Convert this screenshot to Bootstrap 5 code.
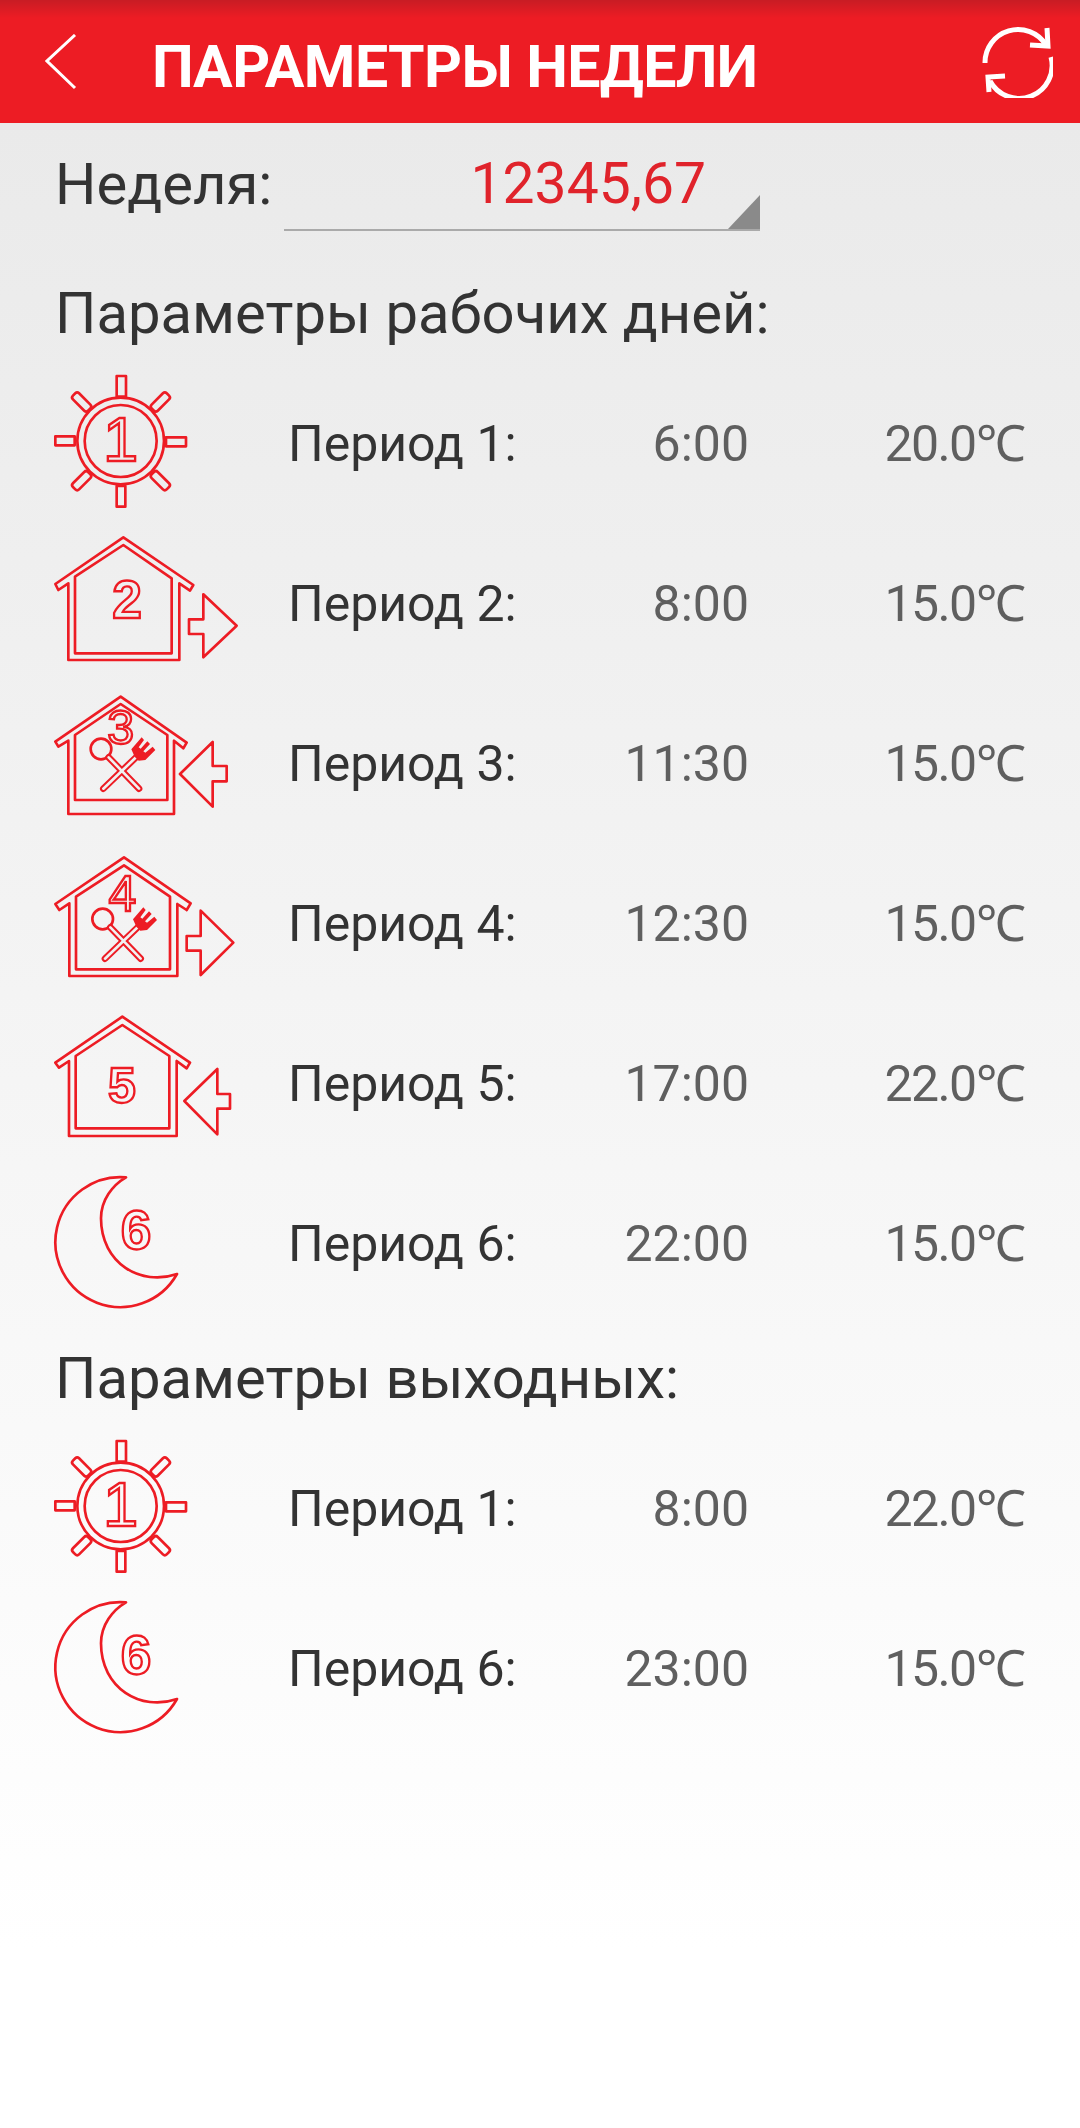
<!DOCTYPE html>
<html lang="ru">
<head>
  <meta charset="UTF-8" />
  <meta name="viewport" content="width=device-width, initial-scale=1.0" />
  <title>Параметры недели</title>
  <link rel="stylesheet" href="https://cdn.jsdelivr.net/npm/bootstrap@5.3.0/dist/css/bootstrap.min.css">
  <style>
    html, body { height: 100%; }
    body { font-family: Roboto, "Liberation Sans", sans-serif; background: linear-gradient(#eaeaea 123px, #ffffff 1950px); color: #333; }
    .top-bar { height: 123px; background: linear-gradient(#c81c24 0, #ed1c24 18px); padding: 0 27px 0 45px; }
    .top-title { font-size: 59px; font-weight: 700; color: #fff; margin: 10px 0 0 75px; line-height: 1; letter-spacing: -0.6px; }
    .week-row { padding: 23px 0 0 55px; height: 160px; }
    .week-label { font-size: 58px; line-height: 76px; color: #333; width: 229px; }
    .week-select { width: 476px; height: 85px; border-bottom: 2px solid #aaa; position: relative; font-size: 57px; color: #e0232b; text-align: right; padding-right: 54px; line-height: 76px; }
    .week-select::after { content: ""; position: absolute; right: 0; bottom: 0; width: 32px; height: 34px; background: #8a8a8a; clip-path: polygon(100% 0, 100% 100%, 0 100%); }
    .sect-title { font-size: 58px; line-height: 60px; padding-left: 55px; color: #333; }
    .sect-two { margin-top: 24px; }
    .per-list { margin-top: 21px; }
    .per-row { height: 160px; font-size: 50px; color: #333; }
    .per-icon { width: 240px; height: 160px; margin-left: 30px; flex: none; }
    .per-name { width: 251px; margin-left: 18px; }
    .per-time { width: 210px; text-align: right; color: #5f5f5f; }
    .per-temp { width: 275px; text-align: right; color: #5f5f5f; letter-spacing: -1.6px; }
    .ln { fill: none; stroke: #ed1c24; stroke-width: 8; stroke-linejoin: round; }
    .dg { fill: none; stroke: #ed1c24; stroke-width: 7; font-family: "Liberation Sans", sans-serif; font-weight: 700; text-anchor: middle; }
  </style>
</head>
<body>
  <svg width="0" height="0" class="position-absolute">
    <defs>
      <g id="sun">
        <circle class="ln" cx="272" cy="243" r="130" />
        <circle class="ln" cx="272" cy="243" r="108" />
        <rect class="ln" x="260" y="48" width="28" height="62" />
        <rect class="ln" x="260" y="378" width="26" height="62" />
        <rect class="ln" x="76" y="229" width="58" height="27" />
        <rect class="ln" x="408" y="232" width="60" height="27" />
        <rect class="ln" x="-32" y="-13" width="64" height="26" rx="8" transform="translate(155 126) rotate(45)" />
        <rect class="ln" x="-32" y="-13" width="64" height="26" rx="8" transform="translate(391 126) rotate(-45)" />
        <rect class="ln" x="-32" y="-13" width="64" height="26" rx="8" transform="translate(155 362) rotate(-45)" />
        <rect class="ln" x="-32" y="-13" width="64" height="26" rx="8" transform="translate(391 362) rotate(45)" />
        <text class="dg" x="272" y="304" font-size="190" style="font-weight:400">1</text>
      </g>
      <g id="food">
        <circle class="ln" cx="213" cy="207" r="31" />
        <path d="M236 232 L327 326 M318 232 L220 326" stroke="#ed1c24" stroke-width="20" stroke-linecap="round" fill="none" />
        <path d="M236 232 L327 326 M318 232 L220 326" stroke="#f1f1f1" stroke-width="8" stroke-linecap="round" fill="none" />
        <path d="M314 230 L304 208 L335 172 L342 180 L326 202 L332 206 L352 184 L360 192 L340 214 L346 218 L368 200 L376 210 L346 240 L326 242 Z" fill="#ed1c24" />
      </g>
      <g id="moon">
        <path class="ln" d="M285 532 A195 195 0 1 0 438 822 C330 860 210 790 210 655 C210 600 245 555 285 532 Z" transform="translate(3 0)" />
        <text class="dg" x="318" y="746" font-size="165">6</text>
      </g>
    </defs>
  </svg>

  <div class="top-bar d-flex align-items-center">
    <svg width="32" height="56" viewBox="0 0 32 56"><path d="M30 1 L2 27 L30 54" fill="none" stroke="#fff" stroke-width="3" /></svg>
    <div class="top-title flex-grow-1">ПАРАМЕТРЫ НЕДЕЛИ</div>
    <svg width="72" height="72" viewBox="0 0 72 72">
      <path d="M4 37 A33 33 0 0 1 65 19 M70 31 A33 33 0 0 1 9 55" fill="none" stroke="#fff" stroke-width="5" />
      <path d="M66 2 L67 20 L49 19 M24 50 L7 51 L8 66" fill="none" stroke="#fff" stroke-width="5" />
    </svg>
  </div>

  <div class="week-row d-flex">
    <div class="week-label">Неделя:</div>
    <div class="week-select">12345,67</div>
  </div>

  <div class="sect-title">Параметры рабочих дней:</div>
  <div class="per-list">
    <div class="per-row d-flex align-items-center">
      <svg class="per-icon" viewBox="0 12 720 480"><use href="#sun" /></svg>
      <div class="per-name">Период 1:</div><div class="per-time">6:00</div><div class="per-temp">20.0℃</div>
    </div>
    <div class="per-row d-flex align-items-center">
      <svg class="per-icon" viewBox="0 492 720 480">
        <path class="ln" d="M280 532 L490 675 L480 692 L448 670 V900 H115 V670 L85 690 L76 672 Z" />
        <path class="ln" d="M280 555 L425 655 V880 H135 V650 Z" />
        <path class="ln" d="M520 703 L620 797 L520 892 V822 H477 V778 H520 Z" />
        <text class="dg" x="291" y="775" font-size="160">2</text>
      </svg>
      <div class="per-name">Период 2:</div><div class="per-time">8:00</div><div class="per-temp">15.0℃</div>
    </div>
    <div class="per-row d-flex align-items-center">
      <svg class="per-icon" viewBox="0 12 720 480">
        <path class="ln" d="M272 50 L470 188 L460 205 L432 182 V402 H115 V182 L85 200 L76 185 Z" />
        <path class="ln" d="M272 72 L412 165 V360 H135 V165 Z" />
        <path class="ln" d="M450 282 L548 186 V258 H590 V304 H548 V380 Z" />
        <use href="#food" />
        <text class="dg" x="272" y="192" font-size="145" style="font-weight:400">3</text>
      </svg>
      <div class="per-name">Период 3:</div><div class="per-time">11:30</div><div class="per-temp">15.0℃</div>
    </div>
    <div class="per-row d-flex align-items-center">
      <svg class="per-icon" viewBox="0 492 720 480">
        <path class="ln" d="M282 532 L482 670 L470 690 L442 672 V888 H118 V670 L88 690 L76 672 Z" />
        <path class="ln" d="M282 556 L420 650 V868 H138 V650 Z" />
        <path class="ln" d="M512 692 L610 788 L512 885 V812 H470 V768 H512 Z" />
        <use href="#food" transform="translate(5 510)" />
        <text class="dg" x="277" y="692" font-size="150" style="font-weight:400">4</text>
      </svg>
      <div class="per-name">Период 4:</div><div class="per-time">12:30</div><div class="per-temp">15.0℃</div>
    </div>
    <div class="per-row d-flex align-items-center">
      <svg class="per-icon" viewBox="0 12 720 480">
        <path class="ln" d="M277 50 L480 188 L470 205 L440 183 V408 H117 V183 L87 203 L76 188 Z" />
        <path class="ln" d="M277 75 L418 168 V385 H137 V168 Z" />
        <path class="ln" d="M463 303 L562 207 V282 H600 V326 H562 V403 Z" />
        <text class="dg" x="276" y="308" font-size="150">5</text>
      </svg>
      <div class="per-name">Период 5:</div><div class="per-time">17:00</div><div class="per-temp">22.0℃</div>
    </div>
    <div class="per-row d-flex align-items-center">
      <svg class="per-icon" viewBox="0 492 720 480"><use href="#moon" /></svg>
      <div class="per-name">Период 6:</div><div class="per-time">22:00</div><div class="per-temp">15.0℃</div>
    </div>
  </div>

  <div class="sect-title sect-two">Параметры выходных:</div>
  <div class="per-list">
    <div class="per-row d-flex align-items-center">
      <svg class="per-icon" viewBox="0 12 720 480"><use href="#sun" /></svg>
      <div class="per-name">Период 1:</div><div class="per-time">8:00</div><div class="per-temp">22.0℃</div>
    </div>
    <div class="per-row d-flex align-items-center">
      <svg class="per-icon" viewBox="0 492 720 480"><use href="#moon" /></svg>
      <div class="per-name">Период 6:</div><div class="per-time">23:00</div><div class="per-temp">15.0℃</div>
    </div>
  </div>
</body>
</html>
